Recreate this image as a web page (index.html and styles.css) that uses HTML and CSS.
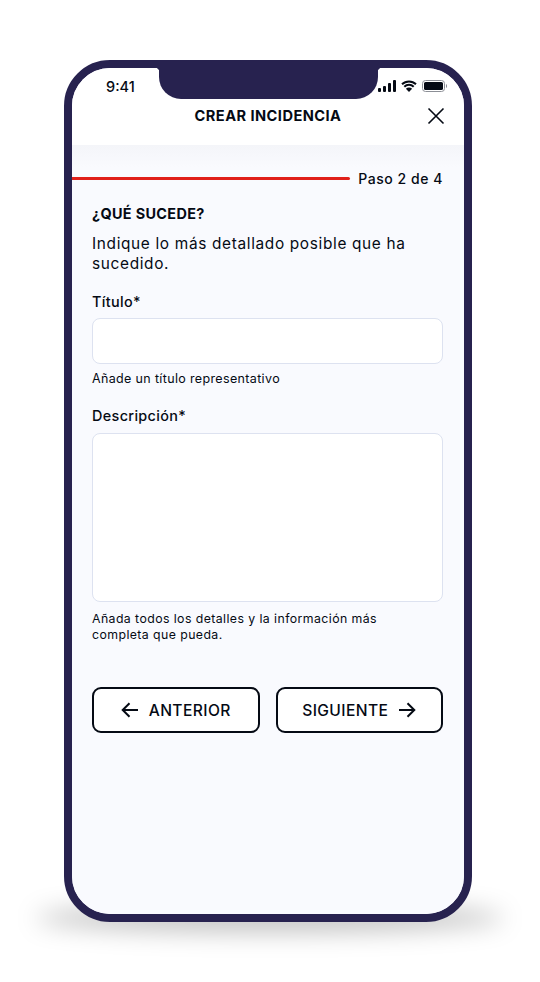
FILE: index.html
```html
<!DOCTYPE html>
<html lang="es">
<head>
<meta charset="utf-8">
<title>Crear incidencia</title>
<link rel="stylesheet" href="styles.css">
</head>
<body>
<div class="stage">
  <div class="shadow"></div>
  <div class="phone">
    <div class="notch"></div>
    <div class="status">
      <span class="time">9:41</span>
      <div class="status-icons">
        <svg width="18" height="12" viewBox="0 0 18 12"><rect x="0" y="8" width="3" height="4" rx="1"/><rect x="5" y="6" width="3" height="6" rx="1"/><rect x="10" y="3" width="3" height="9" rx="1"/><rect x="15" y="0" width="3" height="12" rx="1"/></svg>
        <svg width="16" height="12" viewBox="0 0 16 12"><path d="M1 4.3a10 10 0 0 1 14 0M3.3 6.8a6.7 6.7 0 0 1 9.4 0" fill="none" stroke="#050a14" stroke-width="2"/><path d="M8 12L4.9 8.8a4.4 4.4 0 0 1 6.2 0z"/></svg>
        <svg width="25" height="12" viewBox="0 0 25 12"><rect x=".5" y=".5" width="22" height="11" rx="3" fill="none" stroke="#8c8f96"/><rect x="2" y="2" width="19" height="8" rx="1.6"/><path d="M24 4v4a2 2 0 0 0 1-2 2 2 0 0 0-1-2z" fill="#8c8f96"/></svg>
      </div>
    </div>
    <header class="topbar">
      <h1 class="title">CREAR INCIDENCIA</h1>
      <svg class="close" width="18" height="18" viewBox="0 0 18 18"><path d="M1.5 1.5l15 15M16.5 1.5l-15 15" fill="none" stroke="#050a14" stroke-width="1.6"/></svg>
    </header>
    <main class="body">
      <div class="progress">
        <div class="bar"></div>
        <span class="step">Paso 2 de 4</span>
      </div>
      <div class="content">
        <h2 class="heading">¿QUÉ SUCEDE?</h2>
        <p class="intro">Indique lo más detallado posible que ha sucedido.</p>
        <label class="label">Título*</label>
        <div class="input"></div>
        <p class="hint">Añade un título representativo</p>
        <label class="label label-desc">Descripción*</label>
        <div class="input textarea"></div>
        <p class="hint hint-desc">Añada todos los detalles y la información más completa que pueda.</p>
        <div class="actions">
          <button class="btn">
            <svg width="18" height="16" viewBox="0 0 18 16"><path d="M17 8H2M8.5 1.2L1.7 8l6.8 6.8" fill="none" stroke="#050a14" stroke-width="2"/></svg>
            ANTERIOR
          </button>
          <button class="btn">
            SIGUIENTE
            <svg width="18" height="16" viewBox="0 0 18 16"><path d="M1 8h15M9.5 1.2L16.3 8l-6.8 6.8" fill="none" stroke="#050a14" stroke-width="2"/></svg>
          </button>
        </div>
      </div>
    </main>
  </div>
</div>
</body>
</html>
```
FILE: styles.css
```css
* { box-sizing: border-box; }
html, body { margin: 0; background: #fff; }
body { font-family: "Inter", "Liberation Sans", sans-serif; color: #050a14; }
.stage { position: relative; width: 540px; height: 982px; padding: 60px 68px 0 64px; overflow: hidden; }
.shadow { position: absolute; left: 36px; top: 904px; width: 468px; height: 28px; border-radius: 50%; background: rgba(0,0,0,.24); filter: blur(12px); }
.phone { position: relative; width: 408px; height: 862px; border: 8px solid #27224f; border-radius: 46px; background: #f9fafe; overflow: hidden; display: flex; flex-direction: column; }
.notch { position: absolute; left: 87px; top: 0; width: 219px; height: 31px; background: #27224f; border-radius: 0 0 22px 22px; }
.notch::before, .notch::after { content: ""; position: absolute; top: 0; width: 4px; height: 4px; }
.notch::before { left: -4px; background: radial-gradient(circle at 0 100%, transparent 4px, #27224f 4.5px); }
.notch::after { right: -4px; background: radial-gradient(circle at 100% 100%, transparent 4px, #27224f 4.5px); }
.status { height: 32px; background: #fff; display: flex; justify-content: space-between; align-items: center; padding: 4px 17px 0 34px; flex: none; }
.time { font-size: 14.5px; font-weight: 500; }
.status-icons { display: flex; align-items: center; gap: 5px; }
.status-icons svg { fill: #050a14; display: block; }
.topbar { height: 45px; background: #fff; display: flex; align-items: center; justify-content: center; position: relative; flex: none; padding-bottom: 13px; }
.title { margin: 0; font-size: 14.6px; font-weight: 700; letter-spacing: .45px; }
.close { position: absolute; right: 19px; top: 7px; }
.body { flex: 1; background: linear-gradient(#f4f5f9, #f9fafe 22px); padding-top: 26px; }
.progress { display: flex; align-items: center; gap: 8px; padding-right: 21px; height: 15px; }
.bar { flex: 1; height: 3px; background: #e0201a; border-radius: 0 2px 2px 0; }
.step { font-size: 14px; font-weight: 500; letter-spacing: .55px; }
.content { padding: 20px 21px 0 20px; }
.heading { margin: 0; font-size: 14.4px; font-weight: 700; line-height: 16px; letter-spacing: .35px; }
.intro { margin: 12px 0 0; font-size: 15.4px; line-height: 20px; letter-spacing: .66px; }
.label { display: block; margin-top: 19px; font-size: 14.4px; line-height: 18px; font-weight: 500; letter-spacing: .35px; }
.label-desc { margin-top: 20px; }
.input { margin-top: 7px; height: 46px; background: #fff; border: 1px solid #dde2f0; border-radius: 8px; }
.textarea { height: 169px; margin-top: 8px; }
.hint { margin: 7px 0 0; font-size: 12.5px; line-height: 16px; letter-spacing: .35px; }
.hint-desc { margin-top: 9px; font-size: 12.3px; letter-spacing: .42px; padding-right: 50px; }
.actions { display: flex; gap: 16px; margin-top: 44px; }
.btn { flex: 1; height: 46px; background: #fff; border: 2px solid #050a14; border-radius: 9px; display: flex; align-items: center; justify-content: center; gap: 10px; font: 500 15.6px "Inter", "Liberation Sans", sans-serif; letter-spacing: .4px; color: #050a14; padding: 0; }
```
